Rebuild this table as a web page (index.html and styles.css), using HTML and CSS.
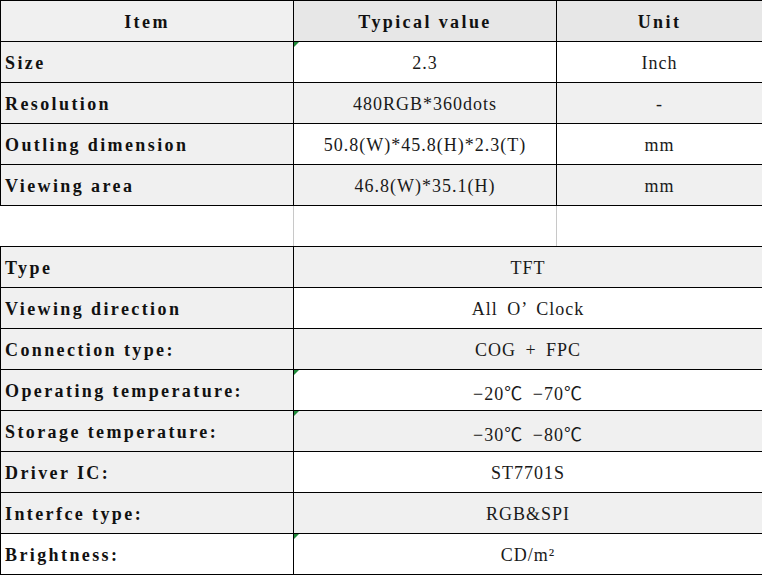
FILE: index.html
```html
<!DOCTYPE html>
<html>
<head>
<meta charset="utf-8">
<link rel="stylesheet" href="styles.css">
</head>
<body>
<table class="spec">
  <colgroup>
    <col class="c1"><col class="c2"><col class="c3">
  </colgroup>
  <tr class="head">
    <th class="g1">Item</th>
    <th class="g2">Typical value</th>
    <th class="g2">Unit</th>
  </tr>
  <tr>
    <td class="lbl g1">Size</td>
    <td class="val mark">2.3</td>
    <td class="val">Inch</td>
  </tr>
  <tr>
    <td class="lbl g1">Resolution</td>
    <td class="val g1">480RGB*360dots</td>
    <td class="val g1">-</td>
  </tr>
  <tr>
    <td class="lbl g1">Outling dimension</td>
    <td class="val">50.8(W)*45.8(H)*2.3(T)</td>
    <td class="val">mm</td>
  </tr>
  <tr>
    <td class="lbl g1">Viewing area</td>
    <td class="val g1">46.8(W)*35.1(H)</td>
    <td class="val g1">mm</td>
  </tr>
  <tr class="blank">
    <td class="first"></td>
    <td></td>
    <td class="last"></td>
  </tr>
  <tr>
    <td class="lbl g1">Type</td>
    <td class="val g1" colspan="2">TFT</td>
  </tr>
  <tr>
    <td class="lbl g1">Viewing direction</td>
    <td class="val" colspan="2">All O’ Clock</td>
  </tr>
  <tr>
    <td class="lbl g1">Connection type:</td>
    <td class="val g1" colspan="2">COG + FPC</td>
  </tr>
  <tr>
    <td class="lbl g1">Operating temperature:</td>
    <td class="val mark" colspan="2">−20℃ −70℃</td>
  </tr>
  <tr>
    <td class="lbl g1">Storage temperature:</td>
    <td class="val g1 mark" colspan="2">−30℃ −80℃</td>
  </tr>
  <tr>
    <td class="lbl g1">Driver IC:</td>
    <td class="val" colspan="2">ST7701S</td>
  </tr>
  <tr>
    <td class="lbl g1">Interfce type:</td>
    <td class="val g1" colspan="2">RGB&amp;SPI</td>
  </tr>
  <tr>
    <td class="lbl">Brightness:</td>
    <td class="val mark" colspan="2">CD/m²</td>
  </tr>
</table>
</body>
</html>
```

FILE: styles.css
```css
html, body {
  margin: 0;
  padding: 0;
  background: #ffffff;
}

.spec {
  border-collapse: collapse;
  table-layout: fixed;
  width: 762px;
  font-family: "Liberation Serif", "Noto Sans CJK SC", serif;
  color: #111111;
}

.c1 { width: 293px; }
.c2 { width: 263px; }
.c3 { width: 206px; }

.spec th,
.spec td {
  border: 1px solid #000000;
  height: 40px;
  padding: 3px 0 0 0;
  box-sizing: border-box;
  vertical-align: middle;
  position: relative;
}

.spec th {
  font-weight: bold;
  font-size: 18px;
  letter-spacing: 2.4px;
  text-align: center;
}

.spec tr { height: 41px; }

.g1 { background: #f0f0f0; }
.head .g2 { background: #e7e7e7; }

.lbl {
  font-weight: bold;
  font-size: 18px;
  letter-spacing: 2.4px;
  text-align: left;
  padding-left: 4px !important;
  white-space: nowrap;
}

.val {
  font-size: 18px;
  letter-spacing: 1px;
  word-spacing: 4px;
  text-align: center;
  color: #1a1a1a;
  white-space: nowrap;
}

.blank td {
  border-left-color: #c8c8c8;
  border-right-color: #c8c8c8;
  background: #ffffff;
}
.blank td.first { border-left-color: #ffffff; }

.mark::before {
  content: "";
  position: absolute;
  left: 0;
  top: 0;
  width: 0;
  height: 0;
  border-top: 5px solid #1f8a3a;
  border-right: 5px solid transparent;
}
```
